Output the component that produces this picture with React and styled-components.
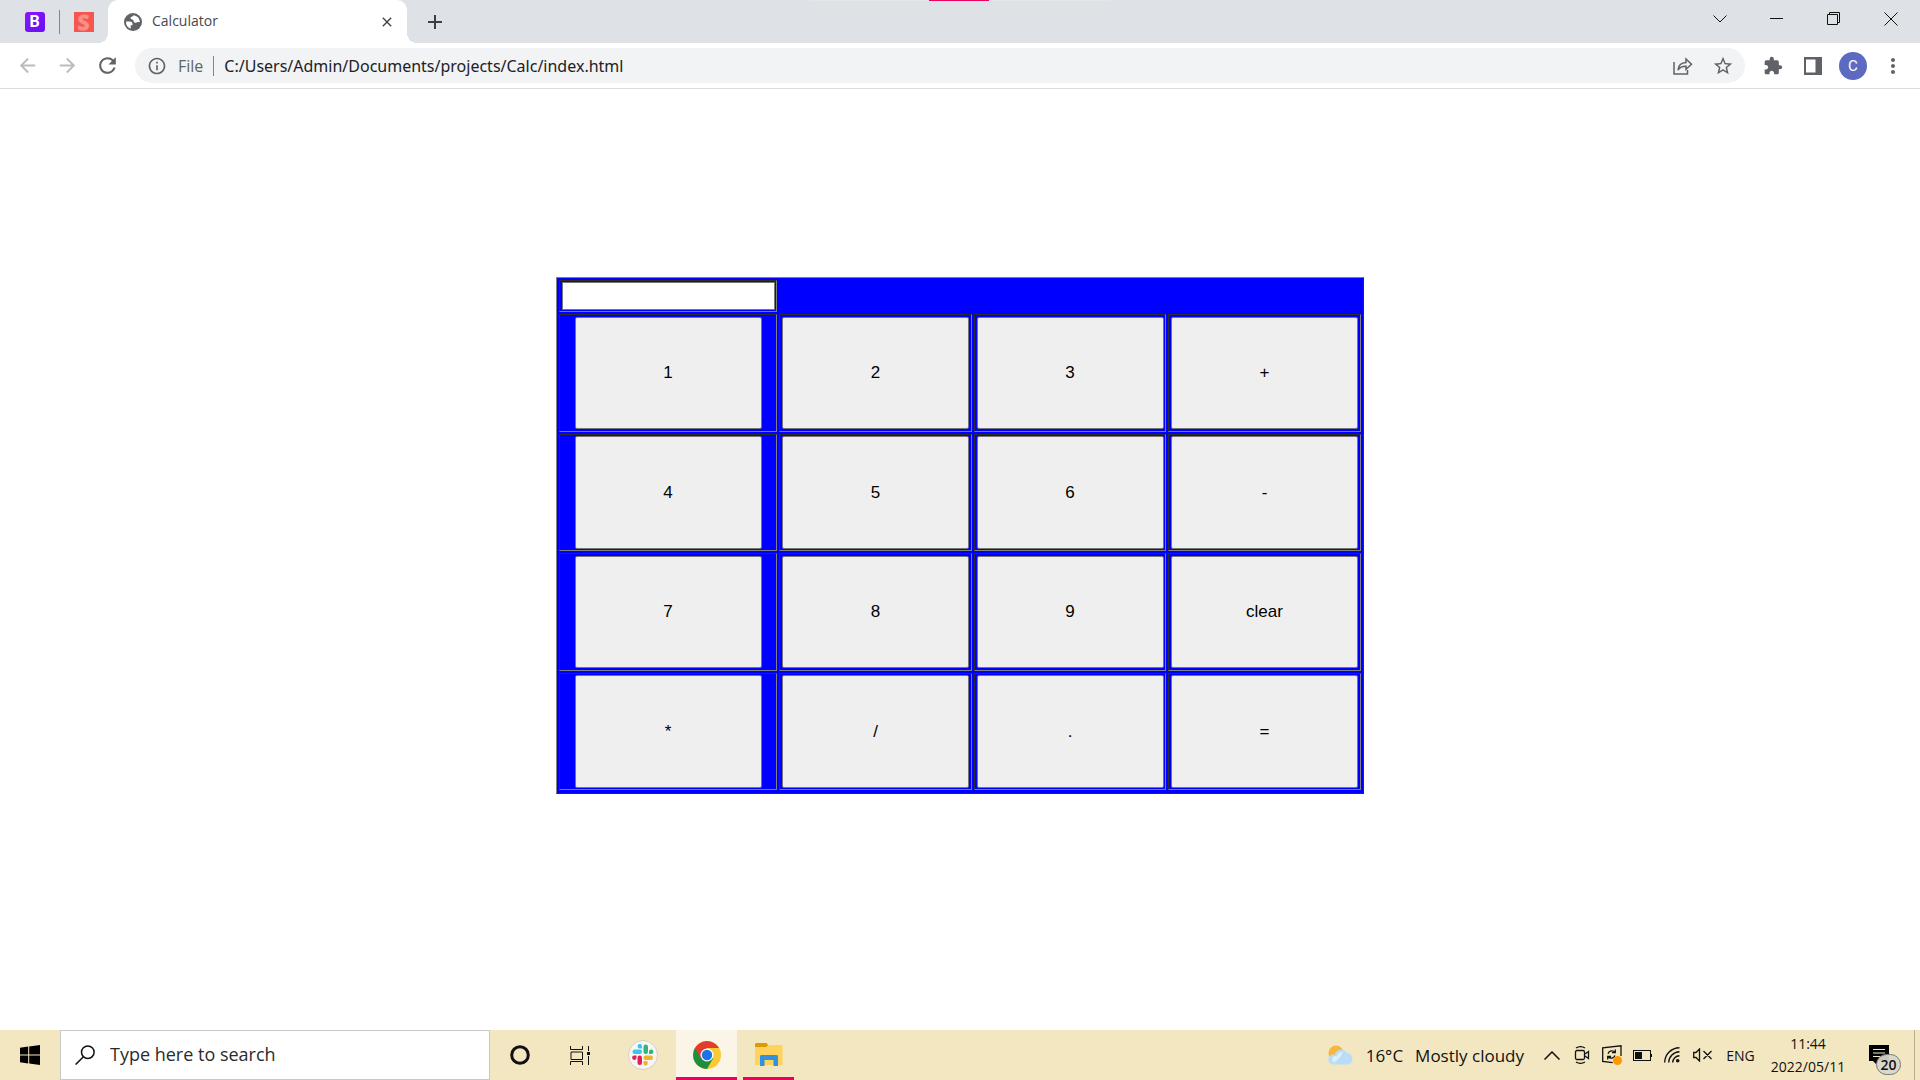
import React, { useState } from "react";
import styled, { createGlobalStyle, css } from "styled-components";
import { MdExtension, MdStarBorder, MdInfoOutline, MdArrowBack, MdArrowForward, MdRefresh, MdMoreVert, MdClose, MdAdd } from "react-icons/md";

const ui = `"Open Sans", "Noto Sans", sans-serif`;

const Global = createGlobalStyle`
  * { box-sizing: border-box; }
  body { margin: 0; background: #fff; font-family: ${ui}; color: #202124; }
  button, input { font: inherit; color: inherit; }
  svg { display: block; flex: none; }
`;

const Screen = styled.div`
  display: flex;
  flex-direction: column;
  min-height: 100vh;
`;

const PlainButton = styled.button`
  display: flex;
  align-items: center;
  justify-content: center;
  padding: 0;
  border: 0;
  background: transparent;
`;

/* ---- Tab strip ---- */
const TabStrip = styled.header`
  position: relative;
  display: flex;
  height: 43px;
  background: #dee1e6;
`;
const TopEdge = styled.div`
  position: absolute;
  top: 0;
  left: 50%;
  width: 302px;
  height: 1px;
  transform: translateX(-50%);
  background: linear-gradient(90deg, #e6e6e6 120px, #ea005e 120px, #ea005e 180px, #e6e6e6 180px);
`;
const PinnedTab = styled(PlainButton)`
  width: 49px;
  height: 43px;
`;
const Pinned = styled.div`
  display: flex;
  align-items: center;
  padding-left: 10px;
`;
const TabDivider = styled.span`
  width: 1px;
  height: 24px;
  margin-right: -1px;
  background: #80868b;
`;
const BBadge = styled.span`
  width: 20px;
  height: 20px;
  border-radius: 3px;
  background: linear-gradient(135deg, #9013fe, #6610f2);
  color: #fff;
  font: 700 16px/20px Roboto, sans-serif;
`;
const SBadge = styled.span`
  width: 20px;
  height: 20px;
  background: #f55750;
  color: #fa8f87;
  font: 700 21px/20px "Open Sans", sans-serif;
  -webkit-text-stroke: 1px #fa8f87;
`;
const ActiveTab = styled.div`
  position: relative;
  display: flex;
  align-items: center;
  width: 299px;
  padding: 0 12px 0 16px;
  border-radius: 10px 10px 0 0;
  background: #fff;
  font-size: 14px;
  &::before,
  &::after {
    content: "";
    position: absolute;
    bottom: 0;
    width: 10px;
    height: 10px;
  }
  &::before {
    right: 100%;
    background: radial-gradient(circle at 0 0, #dee1e6 10px, #fff 10px);
  }
  &::after {
    left: 100%;
    background: radial-gradient(circle at 100% 0, #dee1e6 10px, #fff 10px);
  }
`;
const TabTitle = styled.span`
  flex: 1;
  padding: 0 0 2px 10px;
  color: #45494d;
`;
const TabAction = styled(PlainButton)`
  width: ${(p) => p.$w}px;
  height: 43px;
  color: #3c4043;
`;
const WindowControls = styled.div`
  display: flex;
  margin-left: auto;
  padding-right: 1px;
`;
const WindowButton = styled(PlainButton)`
  width: 57px;
  height: 37px;
`;

/* ---- Toolbar ---- */
const Toolbar = styled.nav`
  display: flex;
  align-items: center;
  height: 46px;
  padding: 0 7px;
  border-bottom: 1px solid #dadce0;
`;
const ToolButton = styled(PlainButton)`
  width: 40px;
  height: 36px;
  color: ${(p) => (p.$dim ? "#babcbe" : "#5f6368")};
`;
const Omnibox = styled.div`
  display: flex;
  flex: 1;
  align-items: center;
  height: 35px;
  margin: 0 8px;
  padding: 0 2px 0 12px;
  border-radius: 18px;
  background: #f1f3f4;
  color: #5f6368;
  font-size: 16px;
`;
const Scheme = styled.span`
  margin-left: 11px;
  padding-right: 10px;
`;
const SchemeLine = styled.span`
  width: 1px;
  height: 20px;
  background: #80868b;
`;
const UrlInput = styled.input`
  flex: 1;
  min-width: 0;
  height: 35px;
  padding: 0 0 0 10px;
  border: 0;
  outline: 0;
  background: transparent;
  color: #202124;
  font-family: "Noto Sans", sans-serif;
`;
const Avatar = styled.span`
  width: 28px;
  height: 28px;
  border-radius: 50%;
  background: #5c6bc0;
  color: #fff;
  font: 400 15px/28px Roboto, sans-serif;
`;

/* ---- Calculator page ---- */
const Page = styled.main`
  flex: 1;
  padding-top: 188px;
`;
const Calculator = styled.table`
  margin: 0 auto;
  padding-bottom: 1px;
  border: 1px solid;
  border-color: #808080 #2c2c2c #2c2c2c #808080;
  border-spacing: 2px;
  background: #00f;
  font: 17px "Liberation Sans", Arial, sans-serif;
`;
const Row = styled.tr`
  height: ${(p) => p.$h}px;
`;
const Cell = styled.td`
  width: ${(p) => p.$w}px;
  padding: 1px;
  border: 1px solid;
  border-color: #2c2c2c #808080 #808080 #2c2c2c;
`;
const Display = styled.input`
  display: block;
  width: 213px;
  height: 28px;
  margin-left: 1px;
  border: 1px solid #767676;
  border-radius: 0;
  background: #fff;
`;
const Key = styled.button`
  display: block;
  width: 187px;
  height: ${(p) => (p.$tall ? 113 : 112)}px;
  margin: 0 auto;
  padding: 0;
  border: 1px solid #767676;
  border-radius: 2px;
  background: #efefef;
  color: #000;
`;

/* ---- Taskbar ---- */
const Taskbar = styled.footer`
  display: flex;
  height: 50px;
  background: #f3e7c2;
  color: #111;
`;
const Start = styled(PlainButton)`
  width: 60px;
`;
const Search = styled.label`
  display: flex;
  align-items: center;
  width: 430px;
  padding-left: 14px;
  border: 1px solid #c8c8c8;
  background: #fff;
`;
const SearchInput = styled.input`
  flex: 1;
  padding: 0 0 2px 15px;
  border: 0;
  outline: 0;
  background: transparent;
  font-size: 18px;
  &::placeholder { color: #2b2b2b; opacity: 1; }
`;
const TaskButton = styled(PlainButton)`
  width: ${(p) => p.$w || 60}px;
  ${(p) => p.$open && css`border-bottom: 3px solid #ea005e; padding-top: 3px;`}
  ${(p) => p.$active && css`background: #faf5e6;`}
  ${(p) => p.$gap && css`margin-left: 6px;`}
`;
const Tray = styled.div`
  display: flex;
  align-items: center;
  margin-left: auto;
`;
const Weather = styled(PlainButton)`
  gap: 12px;
  margin-right: 13px;
  font-size: 17px;
`;
const TrayButton = styled(PlainButton)`
  width: 30px;
  height: 50px;
`;
const Language = styled(PlainButton)`
  width: 47px;
  height: 50px;
  font-size: 14px;
`;
const Clock = styled.div`
  width: 88px;
  text-align: center;
  font-size: 14px;
  line-height: 23px;
`;
const Notices = styled(PlainButton)`
  position: relative;
  width: 62px;
  height: 50px;
  padding-right: 8px;
`;
const Count = styled.span`
  position: absolute;
  top: 24px;
  left: 24px;
  width: 25px;
  height: 21px;
  border: 1px solid #777;
  border-radius: 11px;
  background: #d8d5cbee;
  font-size: 14px;
  font-weight: 600;
  line-height: 19px;
`;
const ShowDesktop = styled(PlainButton)`
  width: 6px;
  height: 50px;
  border-left: 1px solid #b9b094;
`;

const Line = ({ w, h, children, sw = 1, ...rest }) => (
  <svg width={w} height={h} viewBox={`0 0 ${w} ${h}`} fill="none" stroke="#111" strokeWidth={sw} {...rest}>
    {children}
  </svg>
);

const Globe = () => (
  <svg width="18" height="18" viewBox="0 0 18 18">
    <circle cx="9" cy="9" r="9" fill="#5f6368" />
    <path d="M2 8.6h3.9c1.7 0 2.6.9 2.6 2.3v1.3H6.7v3.5A7.1 7.1 0 0 1 2 8.6z" fill="#fff" />
    <path d="M9.5 2.2c-.7 1.8-3 1.1-3 2.8 0 1.5 1.8 1.2 2.6 2.1.8.8.2 2.1 1.700 2.600 1.600.6 1.500-.7 3.100-.7h2a6.900 6.900 0 0 0-6.400-6.800z" fill="#fff" />
  </svg>
);

const Slack = () => (
  <svg width="30" height="30" viewBox="0 0 30 30">
    <circle cx="15" cy="15" r="14.5" fill="#f7f6f3" stroke="#d3cfc2" />
    <g fill="#36c5f0"><rect x="4.500" y="9.500" width="9.500" height="4.500" rx="2.200" /><path d="M14 8.500h-2a2.200 2.200 0 1 1 2-2.200z" /></g>
    <g fill="#2eb67d"><rect x="15.500" y="4.500" width="4.500" height="9.500" rx="2.200" /><path d="M21 14v-2a2.200 2.200 0 1 1 2.200 2z" /></g>
    <g fill="#ecb22e"><rect x="15.500" y="15.500" width="9.500" height="4.500" rx="2.200" /><path d="M15.500 21h2a2.200 2.200 0 1 1-2 2.200z" /></g>
    <g fill="#e01e5a"><rect x="9.500" y="15.500" width="4.500" height="9.500" rx="2.200" /><path d="M8.500 15.500v2a2.200 2.200 0 1 1-2.200-2z" /></g>
  </svg>
);

const Chrome = () => (
  <svg width="28" height="28" viewBox="0 0 28 28">
    <circle cx="14" cy="14" r="14" fill="#fcc934" />
    <path d="M14 14 1.900 7A14 14 0 0 0 14 28l6.100-10.500z" fill="#1e8e3e" />
    <path d="M1.900 7A14 14 0 0 1 26.100 7H14L8 17.500z" fill="#e33b2e" />
    <circle cx="14" cy="14" r="6.500" fill="#fff" />
    <circle cx="14" cy="14" r="5.200" fill="#1a73e8" />
  </svg>
);

const Explorer = () => (
  <svg width="28" height="24" viewBox="0 0 28 24">
    <path d="M0 1.500C0 .7.7 0 1.500 0h10L13 2v3H0z" fill="#dd9a04" />
    <path d="M0 4h11l2.500-2H26.500a1 1 0 0 1 1 1v19h-27.500z" fill="#ffd25c" />
    <path d="M5 13.500c0-1 .6-1.500 1.500-1.500h15c1 0 1.500.5 1.500 1.500V23h-4.500v-6h-9v6H5z" fill="#3390dd" />
  </svg>
);

const Cloud = () => (
  <svg width="26" height="20" viewBox="0 0 26 20">
    <circle cx="8" cy="8" r="7.500" fill="#f6b73c" />
    <path d="M5.500 19.500a5 5 0 0 1-.5-10c.8 0 1 .1 1.600.3A7 7 0 0 1 19.500 8.300 5.700 5.700 0 0 1 20 19.500z" fill="#b9ddf8" />
    <path d="M6 17.500a3.500 3.500 0 0 1 1-6.500c1 0 1.500.3 2 .6a5 5 0 0 1 6-4.600c-2 4-5 8-9 10.500z" fill="#dff0fc" />
  </svg>
);

const keys = [
  ["1", "2", "3", "+"],
  ["4", "5", "6", "-"],
  ["7", "8", "9", "clear"],
  ["*", "/", ".", "="],
];
const columns = [218, 193, 192, 193];

export default function App() {
  const [value, setValue] = useState("");
  const press = (k) => setValue((v) => (k === "clear" ? "" : k === "=" ? v : v + k));

  return (
    <Screen>
      <Global />
      <TabStrip>
        <TopEdge />
        <Pinned>
          <PinnedTab aria-label="Pinned tab B"><BBadge>B</BBadge></PinnedTab>
          <TabDivider />
          <PinnedTab aria-label="Pinned tab S"><SBadge>S</SBadge></PinnedTab>
        </Pinned>
        <ActiveTab>
          <Globe />
          <TabTitle>Calculator</TabTitle>
          <TabAction $w={16} aria-label="Close tab"><MdClose size={16} /></TabAction>
        </ActiveTab>
        <TabAction $w={56} aria-label="New tab"><MdAdd size={24} /></TabAction>
        <WindowControls>
          <WindowButton aria-label="Search tabs"><Line w={14} h={8}><path d="M.5.500 7 7 13.500.5" /></Line></WindowButton>
          <WindowButton aria-label="Minimize"><Line w={13} h={13}><path d="M0 6.500h13" /></Line></WindowButton>
          <WindowButton aria-label="Restore"><Line w={13} h={13}><path d="M.5 2.500h10v10H.500zM2.500 2.500v-2h10v10h-2" /></Line></WindowButton>
          <WindowButton aria-label="Close"><Line w={14} h={14}><path d="M.5.500l13 13M13.500.5l-13 13" /></Line></WindowButton>
        </WindowControls>
      </TabStrip>

      <Toolbar>
        <ToolButton $dim aria-label="Back"><MdArrowBack size={23} /></ToolButton>
        <ToolButton $dim aria-label="Forward"><MdArrowForward size={23} /></ToolButton>
        <ToolButton aria-label="Reload"><MdRefresh size={25} /></ToolButton>
        <Omnibox>
          <MdInfoOutline size={20} />
          <Scheme>File</Scheme>
          <SchemeLine />
          <UrlInput aria-label="Address" defaultValue="C:/Users/Admin/Documents/projects/Calc/index.html" />
          <ToolButton aria-label="Share">
            <Line w={20} h={18} stroke="#5f6368" strokeWidth="1.500">
              <path d="M1 5v12h13.500v-4M5 13c.4-4.600 3-7.200 8-7.400V2l5.500 5.200-5.500 5V9.200C9.500 9 7 10 5 13z" />
            </Line>
          </ToolButton>
          <ToolButton aria-label="Bookmark"><MdStarBorder size={22} /></ToolButton>
        </Omnibox>
        <ToolButton aria-label="Extensions"><MdExtension size={20} /></ToolButton>
        <ToolButton aria-label="Side panel">
          <svg width="18" height="18" viewBox="0 0 18 18"><path fill="#5f6368" fillRule="evenodd" d="M0 0h18v18H0zM2 2.500v13h9.500v-13z" /></svg>
        </ToolButton>
        <ToolButton aria-label="Profile"><Avatar>C</Avatar></ToolButton>
        <ToolButton aria-label="Menu"><MdMoreVert size={24} /></ToolButton>
      </Toolbar>

      <Page>
        <Calculator>
          <tbody>
            <Row $h={32}>
              <Cell $w={columns[0]}><Display aria-label="Result" value={value} onChange={(e) => setValue(e.target.value)} /></Cell>
            </Row>
            {keys.map((row, r) => (
              <Row key={r} $h={r % 2 ? 117 : 118}>
                {row.map((k, c) => (
                  <Cell key={k} $w={columns[c]}><Key $tall={r % 2 === 1} onClick={() => press(k)}>{k}</Key></Cell>
                ))}
              </Row>
            ))}
          </tbody>
        </Calculator>
      </Page>

      <Taskbar>
        <Start aria-label="Start">
          <svg width="20" height="20" viewBox="0 0 20 20"><path d="M0 2.800 8.200 1.600v7.900H0zM9.200 1.500 20 0v9.500H9.200zM0 10.500h8.200v7.900L0 17.200zM9.200 10.500H20V20L9.200 18.500z" /></svg>
        </Start>
        <Search>
          <Line w={20} h={20} sw={1.5}><circle cx="12.800" cy="7.200" r="6.300" /><path d="M8.400 11.800.6 19.500" /></Line>
          <SearchInput aria-label="Search" placeholder="Type here to search" />
        </Search>
        <TaskButton aria-label="Cortana"><Line w={20} h={20} sw={3}><circle cx="10" cy="10" r="8.300" /></Line></TaskButton>
        <TaskButton aria-label="Task view">
          <Line w={20} h={19}><path d="M.5 0v3.500h12V0M.5 19v-3.500h12V19M1 6h11.500v7.500H1zM18.500 0v5M18.500 10v9" /><path d="M17 6h3v3h-3z" fill="#111" stroke="none" /></Line>
        </TaskButton>
        <TaskButton $w={66} aria-label="Slack"><Slack /></TaskButton>
        <TaskButton $w={61} $open $active aria-label="Chrome"><Chrome /></TaskButton>
        <TaskButton $w={51} $open $gap aria-label="File Explorer"><Explorer /></TaskButton>
        <Tray>
          <Weather><Cloud /><span>16°C</span><span>Mostly cloudy</span></Weather>
          <TrayButton aria-label="Hidden icons"><Line w={16} h={9} sw={1.5}><path d="M.5 8.500 8 1l7.500 7.500" /></Line></TrayButton>
          <TrayButton aria-label="Meet now"><Line w={16} h={18} sw={1.3}><rect x="1.500" y="4.500" width="9" height="9" rx="1.500" /><path d="M11 8l3.500-2.500v7L11 10M2 2c3-1.800 6-1.800 9 0M2 16c3 1.800 6 1.800 9 0" /></Line></TrayButton>
          <TrayButton aria-label="Updates">
            <Line w={20} h={20} sw={1.3}><path d="M19 11V.8L.7 2.800V16.500l10 1.200M6 8.800C7 5.500 11 5 13 7.500M13.300 4.500v3.200H10M13 10.500C12 13.500 8 14 6 11.800M5.700 14.500v-3H9" /><circle cx="15.500" cy="15.500" r="4.500" fill="#ff9800" stroke="none" /></Line>
          </TrayButton>
          <TrayButton aria-label="Battery"><Line w={19} h={11}><rect x=".5" y=".5" width="17" height="10" /><path d="M18.500 4v3" /><path d="M2 2h7v7H2z" fill="#111" stroke="none" /></Line></TrayButton>
          <TrayButton aria-label="Wi-Fi"><Line w={16} h={16} sw={1.4}><path d="M.7 15.500A15 15 0 0 1 15.500.7M4.700 15.500A11 11 0 0 1 15.500 4.700M8.700 15.500a7 7 0 0 1 6.800-6.800" /><circle cx="13.700" cy="13.700" r="1.800" fill="#111" stroke="none" /></Line></TrayButton>
          <TrayButton aria-label="Volume muted"><Line w={19} h={14} sw={1.3}><path d="M.7 4.500H3L6.500 1v12L3 9.500H.7zM10.500 3l8 8M18.500 3l-8 8" /></Line></TrayButton>
          <Language>ENG</Language>
          <Clock><div>11:44</div><div>2022/05/11</div></Clock>
          <Notices aria-label="Notifications">
            <svg width="20" height="20" viewBox="0 0 20 20"><path d="M0 0h20v16H8v4l-4-4H0z" fill="#000" /><path d="M4 4.500h12M4 8h12M4 11.500h8" stroke="#f3e7c2" strokeWidth="1.200" /></svg>
            <Count>20</Count>
          </Notices>
          <ShowDesktop aria-label="Show desktop" />
        </Tray>
      </Taskbar>
    </Screen>
  );
}
